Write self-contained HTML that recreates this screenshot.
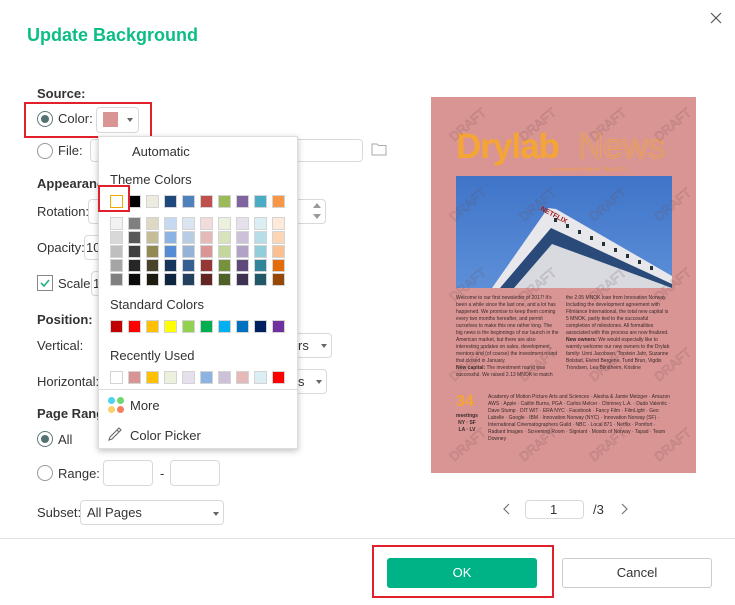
<!DOCTYPE html>
<html><head><meta charset="utf-8"><style>
*{box-sizing:border-box;margin:0;padding:0}
body{width:735px;height:605px;background:#fff;font-family:"Liberation Sans",sans-serif;font-size:13px;color:#333;position:relative;overflow:hidden}
.a{position:absolute}
.b{font-weight:bold;color:#222}
.lbl{position:absolute;line-height:16px;color:#333}
.in{position:absolute;border:1px solid #d9d9d9;border-radius:4px;background:#fff}
.rad{position:absolute;width:16px;height:16px;border:1.5px solid #999;border-radius:50%;background:#fff}
.rad.on{border-color:#5f7a7a}
.rad.on::after{content:"";position:absolute;left:2.5px;top:2.5px;width:8px;height:8px;border-radius:50%;background:#557272}
.car{position:absolute;width:0;height:0;border-left:3px solid transparent;border-right:3px solid transparent;border-top:4px solid #666}
.sw{position:absolute;width:13px;height:13px;border:1px solid #d4d4d4}
.pop{position:absolute;left:98px;top:136px;width:200px;height:313px;background:#fff;border:1px solid #ddd;box-shadow:0 2px 6px rgba(0,0,0,.25)}
.red{position:absolute;border:2px solid #e0202a}
.pv{position:absolute;font-size:5px;line-height:7px;color:#3a2a2a}
.dr{position:absolute;color:transparent;-webkit-text-stroke:0.5px rgba(110,80,80,.35);font-size:13px;transform:rotate(-40deg)}
</style></head><body>
<div class="a b" style="left:27px;top:25px;font-size:18px;color:#0cbd86">Update Background</div>
<svg class="a" style="left:709px;top:11px" width="14" height="14"><path d="M2 2L12 12M12 2L2 12" stroke="#555" stroke-width="1.2"/></svg>

<div class="lbl b" style="left:37px;top:86px">Source:</div>
<div class="rad on" style="left:37px;top:111px"></div>
<div class="lbl" style="left:58px;top:111px">Color:</div>
<div class="in" style="left:96px;top:107px;width:43px;height:26px"></div>
<div class="a" style="left:103px;top:112px;width:15px;height:15px;background:#d99594"></div>
<div class="car" style="left:127px;top:118px"></div>
<div class="red" style="left:24px;top:102px;width:128px;height:36px"></div>

<div class="rad" style="left:37px;top:143px"></div>
<div class="lbl" style="left:58px;top:143px">File:</div>
<div class="in" style="left:90px;top:139px;width:273px;height:23px"></div>
<svg class="a" style="left:371px;top:142px" width="16" height="14"><path d="M1 2h5l1.5 1.5H15V13H1z" fill="none" stroke="#aaa"/></svg>

<div class="lbl b" style="left:37px;top:176px">Appearance:</div>
<div class="lbl" style="left:37px;top:204px">Rotation:</div>
<div class="in" style="left:88px;top:199px;width:238px;height:25px"></div>
<div class="a" style="left:313px;top:203px;border-left:4px solid transparent;border-right:4px solid transparent;border-bottom:5px solid #999"></div>
<div class="a" style="left:313px;top:214px;border-left:4px solid transparent;border-right:4px solid transparent;border-top:5px solid #999"></div>
<div class="lbl" style="left:37px;top:240px">Opacity:</div>
<div class="in" style="left:84px;top:235px;width:100px;height:25px"></div>
<div class="lbl" style="left:86px;top:240px">10</div>
<div class="a" style="left:37px;top:275px;width:16px;height:16px;border:1px solid #888"></div>
<svg class="a" style="left:38px;top:276px" width="14" height="14"><path d="M3 7l3 3 5-6" fill="none" stroke="#1fb37a" stroke-width="1.6"/></svg>
<div class="lbl" style="left:58px;top:276px">Scale:</div>
<div class="in" style="left:91px;top:271px;width:100px;height:25px"></div>
<div class="lbl" style="left:93px;top:276px">1</div>

<div class="lbl b" style="left:37px;top:312px">Position:</div>
<div class="lbl" style="left:37px;top:338px">Vertical:</div>
<div class="in" style="left:200px;top:333px;width:132px;height:25px"></div>
<div class="lbl" style="left:298px;top:338px">rs</div>
<div class="car" style="left:321px;top:344px"></div>
<div class="lbl" style="left:37px;top:374px">Horizontal:</div>
<div class="in" style="left:200px;top:369px;width:127px;height:25px"></div>
<div class="lbl" style="left:298px;top:374px">s</div>
<div class="car" style="left:316px;top:380px"></div>

<div class="lbl b" style="left:37px;top:406px">Page Range:</div>
<div class="rad on" style="left:37px;top:431px"></div>
<div class="lbl" style="left:58px;top:432px">All</div>
<div class="rad" style="left:37px;top:465px"></div>
<div class="lbl" style="left:58px;top:466px">Range:</div>
<div class="in" style="left:103px;top:460px;width:50px;height:26px"></div>
<div class="lbl" style="left:160px;top:466px">-</div>
<div class="in" style="left:170px;top:460px;width:50px;height:26px"></div>
<div class="lbl" style="left:37px;top:505px">Subset:</div>
<div class="in" style="left:80px;top:500px;width:144px;height:25px"></div>
<div class="lbl" style="left:87px;top:505px">All Pages</div>
<div class="car" style="left:213px;top:512px"></div>

<!-- preview -->
<div class="a" style="left:431px;top:97px;width:265px;height:376px;background:#d99594;overflow:hidden">
 <div class="a" style="left:25px;top:30px;font-size:35px;font-weight:bold;color:#f5a533;letter-spacing:-1px">Drylab</div>
 <div class="a" style="left:147px;top:30px;font-size:35px;color:transparent;-webkit-text-stroke:0.8px #f0a540">News</div>
 <div class="a" style="left:120px;top:70px;font-size:5px;color:#f0a040">for investors &amp; friends · May 2017</div>
 <div class="a" style="left:25px;top:79px;width:216px;height:112px;background:linear-gradient(180deg,#3f74c8,#5d8fd8)"></div>
 <svg class="a" style="left:25px;top:79px" width="216" height="112"><polygon points="36,112 92,32 100,33 216,100 216,112" fill="#e8e8ec"/><polygon points="44,112 95,52 216,108 216,112" fill="#2a4a7a"/><polygon points="58,112 96,68 216,112" fill="#d8dae0"/><g fill="#233"><rect x="98" y="42" width="3" height="4"/><rect x="110" y="48" width="3" height="4"/><rect x="122" y="54" width="3" height="4"/><rect x="134" y="60" width="3" height="4"/><rect x="146" y="66" width="3" height="4"/><rect x="158" y="72" width="3" height="4"/><rect x="170" y="78" width="3" height="4"/><rect x="182" y="84" width="3" height="4"/><rect x="194" y="90" width="3" height="4"/></g><text x="84" y="34" font-size="7" fill="#a01818" font-weight="bold" transform="rotate(28 84 34)">NETFLIX</text></svg>
 <div class="pv" style="left:25px;top:198px;width:103px">Welcome to our first newsletter of 2017! It's been a while since the last one, and a lot has happened. We promise to keep them coming every two months hereafter, and permit ourselves to make this one rather long. The big news is the beginnings of our launch in the American market, but there are also interesting updates on sales, development, mentors and (of course) the investment round that closed in January.<br><b>New capital:</b> The investment round was successful. We raised 2.13 MNOK to match</div>
 <div class="pv" style="left:135px;top:198px;width:106px">the 2.05 MNOK loan from Innovation Norway. Including the development agreement with Filmlance International, the total new capital is 5 MNOK, partly tied to the successful completion of milestones. All formalities associated with this process are now finalized.<br><b>New owners:</b> We would especially like to warmly welcome our new owners to the Drylab family: Unni Jacobsen, Torstein Jahr, Suzanne Bolstad, Eivind Bergene, Turid Brun, Vigdis Trondsen, Lea Blindheim, Kristine</div>
 <div class="a" style="left:25px;top:296px;font-size:16px;font-weight:bold;color:#f5a533">34</div>
 <div class="pv" style="left:25px;top:316px;font-weight:bold;text-align:center;width:22px">meetings NY · SF LA · LV</div>
 <div class="pv" style="left:57px;top:297px;width:184px">Academy of Motion Picture Arts and Sciences · Alesha &amp; Jamie Metzger · Amazon AWS · Apple · Caitlin Burns, PGA · Carlos Melcer · Chimney L.A. · Dado Valentic · Dave Stump · DIT WIT · ERA NYC · Facebook · Fancy Film · FilmLight · Geo Labelle · Google · IBM · Innovation Norway (NYC) · Innovation Norway (SF) · International Cinematographers Guild · NBC · Local 871 · Netflix · Pomfort · Radiant Images · Screening Room · Signiant · Moods of Norway · Tapad · Team Downey</div>
 <div class="dr" style="left:15px;top:20px">DRAFT</div><div class="dr" style="left:85px;top:20px">DRAFT</div><div class="dr" style="left:155px;top:20px">DRAFT</div><div class="dr" style="left:220px;top:20px">DRAFT</div>
 <div class="dr" style="left:15px;top:100px">DRAFT</div><div class="dr" style="left:85px;top:100px">DRAFT</div><div class="dr" style="left:155px;top:100px">DRAFT</div><div class="dr" style="left:220px;top:100px">DRAFT</div>
 <div class="dr" style="left:15px;top:180px">DRAFT</div><div class="dr" style="left:85px;top:180px">DRAFT</div><div class="dr" style="left:155px;top:180px">DRAFT</div><div class="dr" style="left:220px;top:180px">DRAFT</div>
 <div class="dr" style="left:15px;top:260px">DRAFT</div><div class="dr" style="left:85px;top:260px">DRAFT</div><div class="dr" style="left:155px;top:260px">DRAFT</div><div class="dr" style="left:220px;top:260px">DRAFT</div>
 <div class="dr" style="left:15px;top:340px">DRAFT</div><div class="dr" style="left:85px;top:340px">DRAFT</div><div class="dr" style="left:155px;top:340px">DRAFT</div><div class="dr" style="left:220px;top:340px">DRAFT</div>
</div>

<svg class="a" style="left:502px;top:503px" width="10" height="12"><path d="M7 1L2 6l5 5" fill="none" stroke="#777" stroke-width="1.2"/></svg>
<div class="in" style="left:525px;top:500px;width:59px;height:19px"></div>
<div class="lbl" style="left:550px;top:502px">1</div>
<div class="lbl" style="left:593px;top:502px">/3</div>
<svg class="a" style="left:619px;top:503px" width="10" height="12"><path d="M3 1l5 5-5 5" fill="none" stroke="#777" stroke-width="1.2"/></svg>

<div class="a" style="left:0;top:538px;width:735px;height:1px;background:#e2e2e2"></div>
<div class="a" style="left:387px;top:558px;width:150px;height:30px;background:#00b386;border-radius:3px;color:#fff;text-align:center;line-height:30px">OK</div>
<div class="red" style="left:372px;top:545px;width:182px;height:53px"></div>
<div class="a" style="left:562px;top:558px;width:150px;height:30px;border:1px solid #ccc;border-radius:3px;color:#333;text-align:center;line-height:28px">Cancel</div>

<!-- popup -->
<div class="pop"></div>
<div class="lbl" style="left:132px;top:144px">Automatic</div>
<div class="lbl" style="left:110px;top:172px">Theme Colors</div>
<div class="lbl" style="left:110px;top:297px">Standard Colors</div>
<div class="lbl" style="left:110px;top:348px">Recently Used</div>
<div class="a" style="left:99px;top:389px;width:198px;height:1px;background:#ddd"></div>
<div class="a" style="left:108px;top:397px;width:7px;height:7px;border-radius:50%;background:#4dd2f0"></div>
<div class="a" style="left:117px;top:397px;width:7px;height:7px;border-radius:50%;background:#6ed86e"></div>
<div class="a" style="left:108px;top:406px;width:7px;height:7px;border-radius:50%;background:#fdd06a"></div>
<div class="a" style="left:117px;top:406px;width:7px;height:7px;border-radius:50%;background:#f77e5e"></div>
<div class="lbl" style="left:130px;top:398px">More</div>
<svg class="a" style="left:107px;top:426px" width="16" height="16"><path d="M2 14l1-3 7-7 2 2-7 7z M10 4l2-2 2 2-2 2" fill="none" stroke="#666" stroke-width="1.1"/></svg>
<div class="lbl" style="left:130px;top:428px">Color Picker</div>
<div id="sw"></div>
<script>
var t=["#ffffff","#000000","#eeece1","#1f497d","#4f81bd","#c0504d","#9bbb59","#8064a2","#4bacc6","#f79646"];
var sh=[["#f2f2f2","#d8d8d8","#bfbfbf","#a5a5a5","#7f7f7f"],["#7f7f7f","#595959","#3f3f3f","#262626","#0c0c0c"],["#ddd9c3","#c4bd97","#938953","#494429","#1d1b10"],["#c6d9f0","#8db3e2","#548dd4","#17365d","#0f243e"],["#dbe5f1","#b8cce4","#95b3d7","#366092","#244061"],["#f2dcdb","#e5b9b7","#d99694","#953734","#632423"],["#ebf1dd","#d7e3bc","#c3d69b","#76923c","#4f6128"],["#e5e0ec","#ccc1d9","#b2a2c7","#5f497a","#3f3151"],["#dbeef3","#b7dde8","#92cddc","#31859b","#205867"],["#fdeada","#fbd5b5","#fac08f","#e36c09","#974806"]];
var s=["#c00000","#ff0000","#ffc000","#ffff00","#92d050","#00b050","#00b0f0","#0070c0","#002060","#7030a0"];
var r=["#ffffff","#d99594","#ffc000","#ebf1dd","#e5e0ec","#8db3e2","#ccc1d9","#e5b9b7","#dbeef3","#ff0000"];
var h="";
for(var i=0;i<10;i++){var x=110+i*18;
h+='<div class="sw" style="left:'+x+'px;top:195px;background:'+t[i]+(i==0?';border:1.5px solid #f0a800':'')+'"></div>';
for(var j=0;j<5;j++)h+='<div class="sw" style="left:'+x+'px;top:'+(217+j*14)+'px;background:'+sh[i][j]+'"></div>';
h+='<div class="sw" style="left:'+x+'px;top:320px;background:'+s[i]+'"></div>';
h+='<div class="sw" style="left:'+x+'px;top:371px;background:'+r[i]+'"></div>';}
document.getElementById('sw').innerHTML=h;
</script>
<div class="red" style="left:98px;top:185px;width:32px;height:27px"></div>
</body></html>
